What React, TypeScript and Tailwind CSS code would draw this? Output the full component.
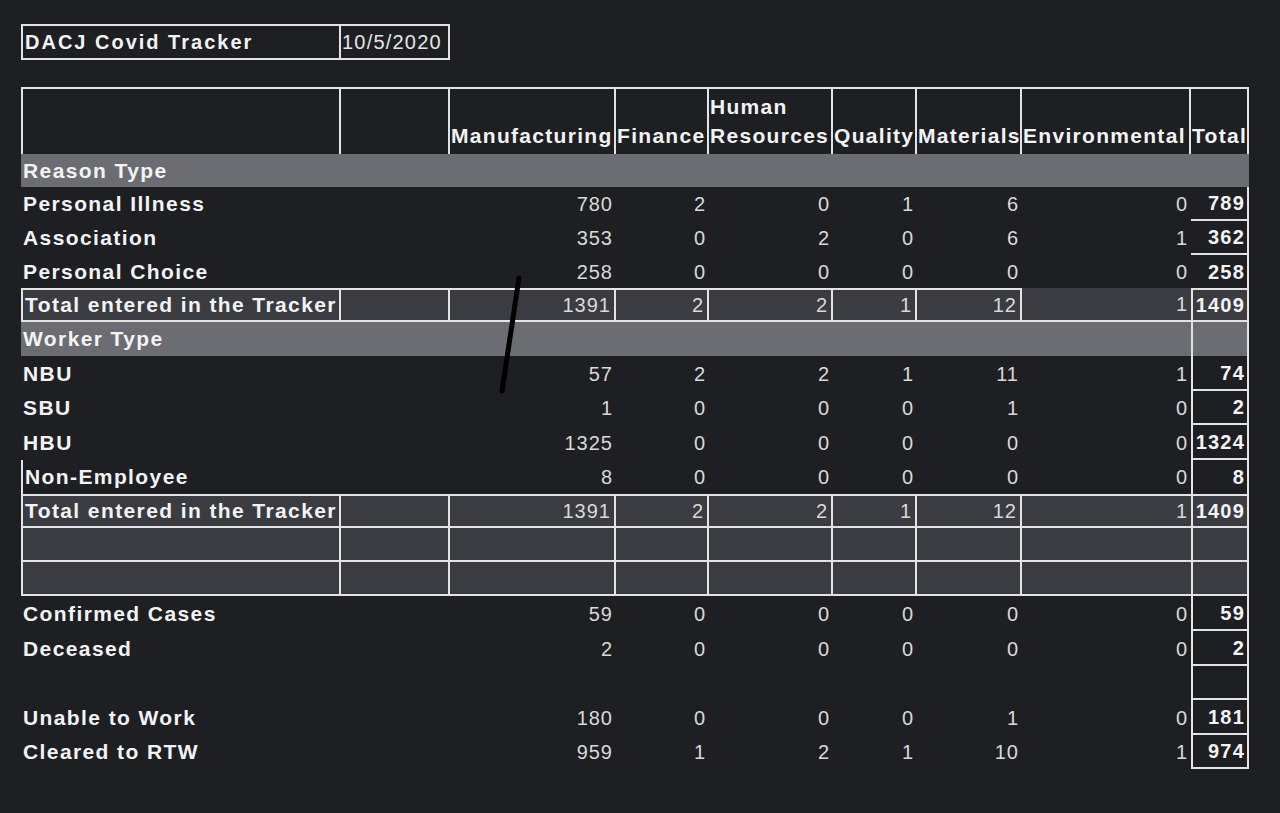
import React from 'react';

const grid = 'grid grid-cols-[320px_109px_166px_93px_124px_84px_105px_169px_58px]';
const line = 'border-[#e3e3e3]';
const labelCls = 'font-bold text-[21px] tracking-[1.4px] text-[#f3f3f3] pl-[2px] flex items-center whitespace-nowrap overflow-hidden';
const numCls = 'text-[20px] tracking-[1px] text-[#d9d9d9] flex items-center justify-end pr-[3px]';
const totCls = 'font-bold text-[20px] tracking-[1.2px] text-[#f3f3f3] flex items-center justify-end pr-[2px]';

interface DataRowProps {
  label?: string;
  vals?: (string | number)[];
  total?: string | number;
  h: string;
  totalBox: string;
  labelBox?: string;
}

// plain row: only the total column is boxed
const DataRow: React.FC<DataRowProps> = ({ label = '', vals = [], total = '', h, totalBox, labelBox = '' }) => (
  <div className={`${grid} ${h}`}>
    <div className={`${labelCls} ${labelBox} ${line}`}>{label}</div>
    <div />
    {[0, 1, 2, 3, 4, 5].map((i) => (
      <div key={i} className={numCls}>{vals[i] ?? ''}</div>
    ))}
    <div className={`${totCls} ${totalBox} ${line}`}>{total}</div>
  </div>
);

interface BoxRowProps {
  label?: string;
  vals?: (string | number)[];
  total?: string | number;
  h: string;
  openEnv?: boolean;
  noTop?: boolean;
}

// grey row with every cell boxed
const BoxRow: React.FC<BoxRowProps> = ({ label = '', vals = [], total = '', h, openEnv, noTop }) => {
  const tb = noTop ? 'border-b-2' : 'border-y-2';
  return (
    <div className={`${grid} ${h} bg-[#3b3c41]`}>
      <div className={`${labelCls} ${tb} border-x-2 ${line}`}>{label}</div>
      <div className={`${tb} border-r-2 ${line}`} />
      {[0, 1, 2, 3, 4].map((i) => (
        <div key={i} className={`${numCls} ${tb} border-r-2 ${line}`}>{vals[i] ?? ''}</div>
      ))}
      <div className={`${numCls} ${openEnv ? 'border-b-2' : tb} ${line}`}>{vals[5] ?? ''}</div>
      <div className={`${totCls} ${tb} border-x-2 ${line}`}>{total}</div>
    </div>
  );
};

const App: React.FC = () => {
  return (
    <div
      className="relative w-[1280px] h-[813px] bg-[#1e1f23] pl-[21px] pt-[24px] overflow-hidden"
      style={{ fontFamily: '"Liberation Sans", Arial, sans-serif' }}
    >
      {/* title box */}
      <div className="flex h-[36px]">
        <div className={`w-[320px] border-2 ${line} flex items-center pl-[2px] font-bold text-[20px] tracking-[2px] text-[#f3f3f3]`}>
          DACJ Covid Tracker
        </div>
        <div className={`w-[109px] border-y-2 border-r-2 ${line} flex items-center pl-[1px] text-[20px] tracking-[1.2px] text-[#e6e6e6]`}>
          10/5/2020
        </div>
      </div>

      <div className="mt-[27px] w-[1228px]">
        {/* header */}
        <div className={`${grid} h-[67px]`}>
          <div className={`border-t-2 border-x-2 ${line}`} />
          <div className={`border-t-2 border-r-2 ${line}`} />
          {['Manufacturing', 'Finance', 'HR', 'Quality', 'Materials', 'Environmental', 'Total'].map((hd) => (
            <div
              key={hd}
              className={`border-t-2 border-r-2 ${line} flex flex-col justify-end pb-[4px] pl-[1px] font-bold text-[21px] tracking-[1.3px] leading-[28px] text-[#f3f3f3] whitespace-nowrap overflow-hidden`}
            >
              {hd === 'HR' ? (
                <>
                  <span className="leading-[30px]">Human</span>
                  <span>Resources</span>
                </>
              ) : (
                <span>{hd}</span>
              )}
            </div>
          ))}
        </div>

        <div className={`h-[33px] bg-[#6b6d72] ${labelCls}`}>Reason Type</div>
        <DataRow h="h-[34px]" label="Personal Illness" vals={[780, 2, 0, 1, 6, 0]} total={789} totalBox="border-r-2 border-b-2" />
        <DataRow h="h-[34px]" label="Association" vals={[353, 0, 2, 0, 6, 1]} total={362} totalBox="border-r-2 border-b-2" />
        <DataRow h="h-[33px]" label="Personal Choice" vals={[258, 0, 0, 0, 0, 0]} total={258} totalBox="border-r-2" />
        <BoxRow h="h-[34px]" label="Total entered in the Tracker" vals={[1391, 2, 2, 1, 12, 1]} total={1409} openEnv />

        <div className={`${grid} h-[34px] bg-[#6b6d72]`}>
          <div className={`${labelCls} col-span-8`}>Worker Type</div>
          <div className={`border-x-2 ${line}`} />
        </div>
        <DataRow h="h-[35px]" label="NBU" vals={[57, 2, 2, 1, 11, 1]} total={74} totalBox="border-x-2 border-b-2" />
        <DataRow h="h-[34px]" label="SBU" vals={[1, 0, 0, 0, 1, 0]} total={2} totalBox="border-x-2 border-b-2" />
        <DataRow h="h-[35px]" label="HBU" vals={[1325, 0, 0, 0, 0, 0]} total={1324} totalBox="border-x-2 border-b-2" />
        <DataRow h="h-[34px]" label="Non-Employee" vals={[8, 0, 0, 0, 0, 0]} total={8} totalBox="border-x-2" labelBox="border-l-2" />
        <BoxRow h="h-[34px]" label="Total entered in the Tracker" vals={[1391, 2, 2, 1, 12, 1]} total={1409} />
        <BoxRow h="h-[34px]" noTop />
        <BoxRow h="h-[34px]" noTop />

        <DataRow h="h-[35px]" label="Confirmed Cases" vals={[59, 0, 0, 0, 0, 0]} total={59} totalBox="border-x-2 border-b-2" />
        <DataRow h="h-[35px]" label="Deceased" vals={[2, 0, 0, 0, 0, 0]} total={2} totalBox="border-x-2 border-b-2" />
        <DataRow h="h-[34px]" totalBox="border-x-2 border-b-2" />
        <DataRow h="h-[35px]" label="Unable to Work" vals={[180, 0, 0, 0, 1, 0]} total={181} totalBox="border-x-2 border-b-2" />
        <DataRow h="h-[34px]" label="Cleared to RTW" vals={[959, 1, 2, 1, 10, 1]} total={974} totalBox="border-x-2 border-b-2" />
      </div>

      {/* pen mark over the table */}
      <svg className="absolute left-[494px] top-[270px]" width="34" height="130" viewBox="0 0 34 130">
        <line x1="25" y1="8" x2="8" y2="121" stroke="#000" strokeWidth="5" strokeLinecap="round" />
      </svg>
    </div>
  );
};

export default App;
